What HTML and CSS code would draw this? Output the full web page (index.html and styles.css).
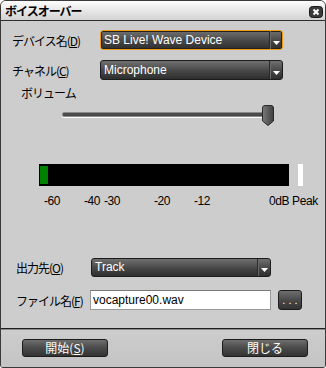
FILE: index.html
```html
<!DOCTYPE html>
<html>
  <head>
    <meta charset="UTF-8" />
    <title>ボイスオーバー</title>
    <link rel="stylesheet" href="styles.css">
  </head>
  <body>
    <div class="window">
      <div class="titlebar">
        <span class="title">ボイスオーバー</span>
        <span class="close">
          <svg width="14" height="12" viewBox="0 0 14 12">
            <rect x="0.5" y="0.5" width="13" height="11" rx="3" fill="#3a3a3a" stroke="#1a1a1a" />
            <path d="M4.5 3.5 L9.5 8.5 M9.5 3.5 L4.5 8.5" stroke="#fff" stroke-width="2" />
          </svg>
        </span>
      </div>

      <div class="content">
        <div class="row">
          <label class="lbl lbl-device">デバイス名(<u>D</u>)</label>
          <div class="combo combo-focus combo-device">
            <span class="combo-text">SB Live! Wave Device</span>
            <span class="combo-arrow">
              <svg width="7" height="5" viewBox="0 0 7 5"><path d="M0 0 H7 L3.5 4 Z" fill="#fff" /></svg>
            </span>
          </div>
        </div>

        <div class="row row-channel">
          <label class="lbl lbl-device">チャネル(<u>C</u>)</label>
          <div class="combo combo-device">
            <span class="combo-text">Microphone</span>
            <span class="combo-arrow">
              <svg width="7" height="5" viewBox="0 0 7 5"><path d="M0 0 H7 L3.5 4 Z" fill="#fff" /></svg>
            </span>
          </div>
        </div>

        <div class="vol-label">ボリューム</div>

        <div class="slider">
          <div class="track"></div>
          <svg class="thumb" width="12" height="21" viewBox="0 0 12 21">
            <defs>
              <linearGradient id="tg" x1="0" y1="0" x2="1" y2="0">
                <stop offset="0" stop-color="#7a7a7a" />
                <stop offset="1" stop-color="#3e3e3e" />
              </linearGradient>
            </defs>
            <path d="M0.5 3 Q0.5 0.5 3 0.5 H9 Q11.5 0.5 11.5 3 V16 L6 20.5 L0.5 16 Z" fill="url(#tg)" stroke="#2a2a2a" />
          </svg>
        </div>

        <div class="meter-row">
          <div class="meter"><div class="level"></div></div>
          <div class="peak"></div>
        </div>

        <div class="scale">
          <span class="tick" style="left: 5px">-60</span>
          <span class="tick" style="left: 45px">-40</span>
          <span class="tick" style="left: 65px">-30</span>
          <span class="tick" style="left: 115px">-20</span>
          <span class="tick" style="left: 155px">-12</span>
          <span class="tick" style="left: 230px">0dB Peak</span>
        </div>

        <div class="row row-output">
          <label class="lbl lbl-out">出力先(<u>O</u>)</label>
          <div class="combo combo-out">
            <span class="combo-text">Track</span>
            <span class="combo-arrow">
              <svg width="7" height="5" viewBox="0 0 7 5"><path d="M0 0 H7 L3.5 4 Z" fill="#fff" /></svg>
            </span>
          </div>
        </div>

        <div class="row row-file">
          <label class="lbl lbl-file">ファイル名(<u>F</u>)</label>
          <input type="text" class="file-input" value="vocapture00.wav" />
          <button class="btn btn-browse">. . .</button>
        </div>
      </div>

      <div class="footer">
        <button class="btn btn-action">開始(<u>S</u>)</button>
        <button class="btn btn-action">閉じる</button>
      </div>
    </div>
  </body>
</html>
```

FILE: styles.css
```css
body {
  margin: 0;
  background: #ffffff;
  font-family: "Liberation Sans", "Noto Sans CJK JP", sans-serif;
  font-size: 12px;
  color: #000;
}

.window {
  width: 326px;
  height: 368px;
  box-sizing: border-box;
  border: 1px solid #3a3a3a;
  border-radius: 6px 6px 3px 3px;
  background: #cdcdcd;
  display: flex;
  flex-direction: column;
  overflow: hidden;
}

.titlebar {
  height: 19px;
  flex: none;
  border-bottom: 1px solid #2e2e2e;
  background: linear-gradient(#fdfdfd, #d2d2d2);
  display: flex;
  align-items: center;
  justify-content: space-between;
  padding: 0 2px 0 4px;
}

.title {
  font-family: "Noto Sans CJK JP", sans-serif;
  font-weight: bold;
  font-size: 12px;
  letter-spacing: -1px;
  line-height: 14px;
}

.close {
  display: flex;
  margin-top: 2px;
}

.content {
  padding: 9px 0 0 11px;
  flex: none;
}

.row {
  display: flex;
  align-items: center;
  height: 20px;
}

.lbl {
  font-family: "Noto Sans CJK JP", sans-serif;
  font-size: 12px;
  letter-spacing: -1px;
  white-space: nowrap;
}

.lbl u,
.btn u {
  text-underline-offset: 1px;
}

.lbl-device {
  width: 88px;
}

.row-channel {
  margin-top: 10px;
}

.combo {
  display: flex;
  align-items: stretch;
  box-sizing: border-box;
  border: 1px solid #1c1c1c;
  border-radius: 3px;
  background: linear-gradient(#707070, #4a4a4a 50%, #2e2e2e);
  color: #fff;
}

.combo-device {
  width: 183px;
  height: 20px;
}

.combo-focus {
  border-color: #f09a10;
  box-shadow: inset 0 0 0 1px #222;
}

.combo-text {
  flex: 1;
  padding-left: 3px;
  line-height: 18px;
  white-space: nowrap;
  overflow: hidden;
}

.combo-arrow {
  width: 13px;
  border-left: 1px solid #2a2a2a;
  box-shadow: inset 1px 0 0 #6a6a6a;
  display: flex;
  align-items: flex-end;
  justify-content: center;
  padding-bottom: 3px;
  box-sizing: border-box;
}

.vol-label {
  margin-top: 6px;
  padding-left: 9px;
  line-height: 14px;
  font-family: "Noto Sans CJK JP", sans-serif;
  letter-spacing: -1px;
}

.slider {
  margin: 5px 0 0 50px;
  height: 21px;
  display: flex;
  align-items: center;
}

.track {
  width: 204px;
  height: 3px;
  background: #4a4a4a;
  border: 1px solid #8a8a8a;
  border-radius: 2px;
  box-shadow: 0 1px 0 #ffffff;
  margin-top: -2px;
}

.thumb {
  margin-left: -6px;
}

.meter-row {
  margin: 38px 0 0 27px;
  display: flex;
  gap: 9px;
}

.meter {
  width: 250px;
  height: 22px;
  box-sizing: border-box;
  padding: 2px 0 2px 1px;
  background: #000;
}

.level {
  width: 8px;
  height: 18px;
  background: #008000;
}

.peak {
  width: 5px;
  height: 22px;
  background: #fff;
}

.scale {
  position: relative;
  height: 14px;
  margin: 8px 0 0 27px;
}

.tick {
  position: absolute;
  top: 0;
  line-height: 14px;
  letter-spacing: -0.4px;
  white-space: nowrap;
}

.row-output {
  margin-top: 50px;
  height: 19px;
}

.lbl-out {
  width: 75px;
  padding-left: 4px;
}

.combo-out {
  width: 180px;
  height: 19px;
}

.combo-out .combo-text {
  line-height: 17px;
}

.row-file {
  margin-top: 13px;
}

.lbl-file {
  width: 74px;
  padding-left: 4px;
}

.file-input {
  width: 181px;
  height: 20px;
  box-sizing: border-box;
  margin: 0;
  padding: 0 2px;
  border: 1px solid #9a9a9a;
  border-top-color: #7a7a7a;
  background: #fff;
  font-family: "Liberation Sans", sans-serif;
  font-size: 12px;
  color: #000;
  outline: none;
}

.btn {
  box-sizing: border-box;
  border: 1px solid #1c1c1c;
  border-radius: 3px;
  background: linear-gradient(#6e6e6e, #4a4a4a 50%, #333333);
  color: #fff;
  font-family: "Noto Sans CJK JP", sans-serif;
  font-size: 12px;
  padding: 0;
  margin: 0;
}

.btn-browse {
  width: 24px;
  height: 20px;
  margin-left: 7px;
  font-family: "Liberation Sans", sans-serif;
  font-size: 11px;
  line-height: 16px;
}

.footer {
  margin-top: auto;
  height: 39px;
  box-sizing: border-box;
  border-top: 1px solid #1e1e1e;
  box-shadow: inset 0 1px 0 #8c8c8c;
  padding: 10px 17px 0 21px;
  display: flex;
  justify-content: space-between;
  align-items: flex-start;
  background: linear-gradient(#cdcdcd, #c4c4c4);
}

.btn-action {
  width: 86px;
  height: 18px;
  line-height: 16px;
}
```
